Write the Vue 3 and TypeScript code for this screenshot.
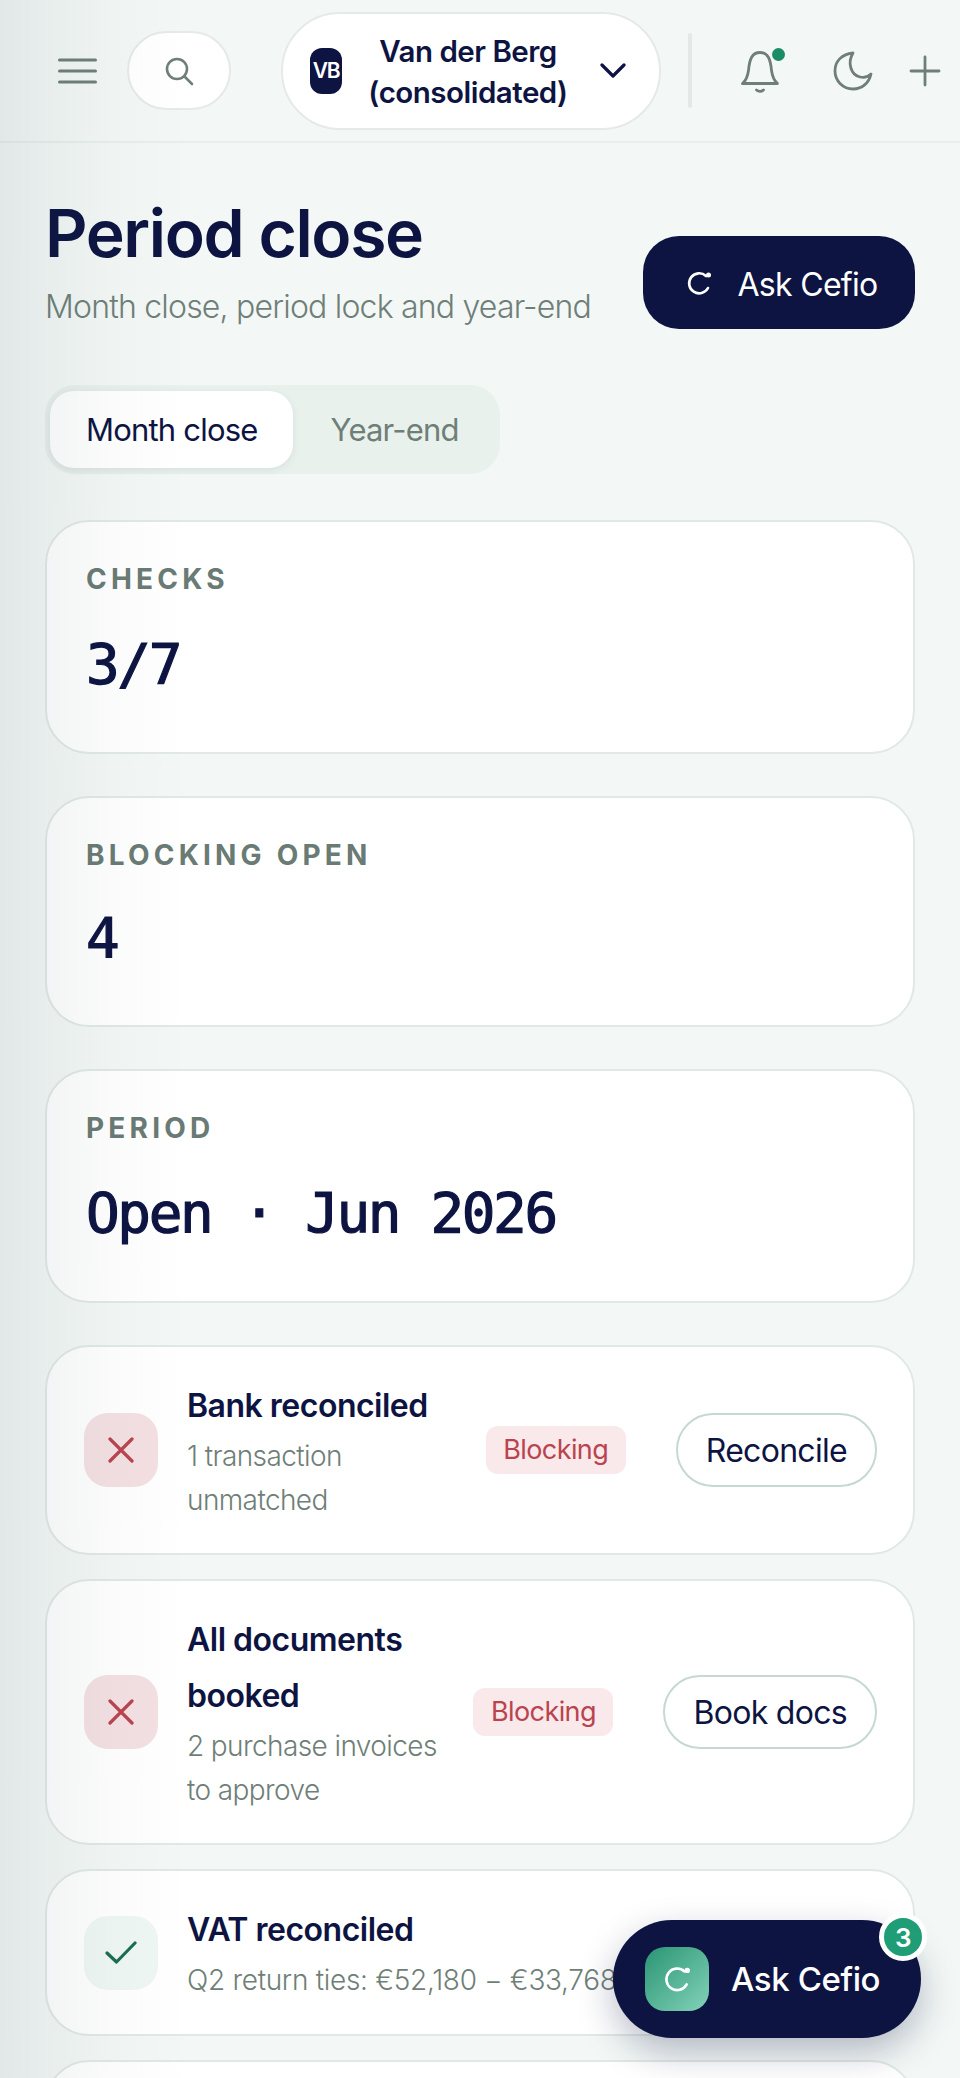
<script setup lang="ts">
type Stat = { label: string; value: string };
type Check = {
  title: string;
  sub: string;
  ok: boolean;
  action?: string;
};

const stats: Stat[] = [
  { label: "CHECKS", value: "3/7" },
  { label: "BLOCKING OPEN", value: "4" },
  { label: "PERIOD", value: "Open · Jun 2026" },
];

const checks: Check[] = [
  { title: "Bank reconciled", sub: "1 transaction unmatched", ok: false, action: "Reconcile" },
  { title: "All documents booked", sub: "2 purchase invoices to approve", ok: false, action: "Book docs" },
  { title: "VAT reconciled", sub: "Q2 return ties: €52,180 − €33,768", ok: true },
];
</script>

<template>
  <div class="page">
    <header class="topbar">
      <button class="icon-btn menu" aria-label="Menu">
        <svg width="39" height="26" viewBox="0 0 39 26" fill="none" stroke="#6f7f78" stroke-width="3" stroke-linecap="round">
          <path d="M1.5 2h36M1.5 13h36M1.5 24h36" />
        </svg>
      </button>
      <button class="search" aria-label="Search">
        <svg width="30" height="30" viewBox="0 0 30 30" fill="none" stroke="#6f7f78" stroke-width="2.6" stroke-linecap="round">
          <circle cx="13" cy="13" r="10" />
          <path d="M20.5 20.5l7.5 7.5" />
        </svg>
      </button>
      <button class="company">
        <span class="avatar">VB</span>
        <span class="company-name">Van der Berg<br />(consolidated)</span>
        <svg width="26" height="15" viewBox="0 0 26 15" fill="none" stroke="#0d1442" stroke-width="3.2" stroke-linecap="round" stroke-linejoin="round">
          <path d="M2 2l11 11L24 2" />
        </svg>
      </button>
      <span class="divider"></span>
      <button class="icon-btn bell" aria-label="Notifications">
        <svg width="42" height="44" viewBox="0 0 42 44" fill="none" stroke="#6f7f78" stroke-width="2.8" stroke-linecap="round" stroke-linejoin="round">
          <path d="M3.500 34.500h35c-3-2.500-5-6-6-13C31.500 10 29 3.500 21 3.500S10.500 10 9.500 21.500c-1 7-3 10.500-6 13z" />
          <path d="M17.500 41c2 1.800 5 1.800 7 0" />
        </svg>
        <span class="dot"></span>
      </button>
      <button class="icon-btn moon" aria-label="Theme">
        <svg width="40" height="40" viewBox="0 0 40 40" fill="none" stroke="#6f7f78" stroke-width="2.8" stroke-linecap="round" stroke-linejoin="round">
          <path d="M20 2C9 3 2 10 2 20c0 10 8 18 18 18 9 0 16-6 18-15-3 3-7 4-11 3C18 24 14 12 20 2z" />
        </svg>
      </button>
      <button class="icon-btn plus" aria-label="Add">
        <svg width="32" height="32" viewBox="0 0 32 32" fill="none" stroke="#6f7f78" stroke-width="2.8" stroke-linecap="round">
          <path d="M16 2v28M2 16h28" />
        </svg>
      </button>
    </header>

    <main class="content">
      <section class="head">
        <div class="head-text">
          <h1>Period close</h1>
          <p>Month close, period lock and year-end</p>
        </div>
        <button class="ask">
          <svg width="26" height="26" viewBox="0 0 26 26" fill="none" stroke="#fff" stroke-width="2.6" stroke-linecap="round">
            <path d="M20 6A10 10 0 1 0 22 18" />
            <circle cx="22.500" cy="5" r="2.500" fill="#fff" stroke="none" />
          </svg>
          <span class="ask-label">Ask Cefio</span>
        </button>
      </section>

      <div class="tabs">
        <span class="tab active">Month close</span>
        <span class="tab">Year-end</span>
      </div>

      <section class="stats">
        <div v-for="s in stats" :key="s.label" class="card stat">
          <div class="stat-label">{{ s.label }}</div>
          <div class="stat-value">{{ s.value }}</div>
        </div>
      </section>

      <section class="checks">
        <div v-for="c in checks" :key="c.title" class="card check">
          <span class="state" :class="c.ok ? 'ok' : 'bad'">
            <svg v-if="c.ok" width="32" height="26" viewBox="0 0 32 26" fill="none" stroke="#1a6e52" stroke-width="3.2" stroke-linecap="round" stroke-linejoin="round">
              <path d="M2 13l9.500 9L30 3" />
            </svg>
            <svg v-else width="26" height="26" viewBox="0 0 26 26" fill="none" stroke="#b9444f" stroke-width="3.2" stroke-linecap="round">
              <path d="M2 2l22 22M24 2L2 24" />
            </svg>
          </span>
          <div class="check-text">
            <div class="check-title">{{ c.title }}</div>
            <div class="check-sub" :class="{ nowrap: c.ok }">{{ c.sub }}</div>
          </div>
          <span v-if="!c.ok" class="chip">Blocking</span>
          <button v-if="c.action" class="action">{{ c.action }}</button>
        </div>
        <!-- next row only shows its top edge above the fold -->
        <div class="card check-next"></div>
      </section>
    </main>

    <button class="fab">
      <span class="fab-logo">
        <svg width="28" height="28" viewBox="0 0 26 26" fill="none" stroke="#fff" stroke-width="2.400" stroke-linecap="round">
          <path d="M20 6A10 10 0 1 0 22 18" />
          <circle cx="22.500" cy="5" r="2.500" fill="#fff" stroke="none" />
        </svg>
      </span>
      Ask Cefio
      <span class="fab-badge">3</span>
    </button>
    <div class="edge-shade"></div>
  </div>
</template>

<style>
html,
body {
  margin: 0;
  background: #f3f8f6;
}
</style>

<style scoped>
.page {
  position: relative;
  width: 960px;
  height: 2078px;
  overflow: hidden;
  background: #f3f8f6;
  color: #0d1442;
  font-family: Inter, "Liberation Sans", sans-serif;
}
button {
  font: inherit;
  color: inherit;
  border: 0;
  background: none;
  padding: 0;
}
.topbar {
  display: flex;
  align-items: center;
  height: 143px;
  padding-left: 58px;
  box-sizing: border-box;
  border-bottom: 2px solid #e8eeeb;
}
.icon-btn {
  position: relative;
  display: flex;
  flex: none;
}
.search {
  display: flex;
  align-items: center;
  justify-content: center;
  flex: none;
  width: 104px;
  height: 79px;
  margin-left: 30px;
  border-radius: 40px;
  background: #fff;
  border: 2px solid #e5eae8;
  box-sizing: border-box;
}
.company {
  display: flex;
  align-items: center;
  flex: none;
  width: 380px;
  height: 118px;
  margin-left: 50px;
  padding: 0 33px 0 27px;
  box-sizing: border-box;
  border-radius: 59px;
  background: #fff;
  border: 2px solid #e5eae8;
}
.avatar {
  display: flex;
  align-items: center;
  justify-content: center;
  flex: none;
  width: 32px;
  height: 46px;
  border-radius: 12px;
  background: #0d1442;
  color: #fff;
  font-size: 21px;
  font-weight: 600;
  letter-spacing: -1.2px;
}
.company-name {
  flex: 1;
  padding: 2px 6px 0 0;
  text-align: center;
  font-size: 29.5px;
  line-height: 41px;
  font-weight: 600;
  letter-spacing: -0.5px;
}
.divider {
  flex: none;
  width: 4px;
  height: 75px;
  margin-left: 27px;
  background: #e3e9e6;
  border-radius: 2px;
}
.bell {
  margin-left: 47px;
}
.dot {
  position: absolute;
  top: -1px;
  right: -4px;
  width: 13px;
  height: 13px;
  border-radius: 50%;
  background: #1b8d66;
}
.moon {
  margin-left: 52px;
}
.plus {
  margin-left: 36px;
}
.content {
  padding: 0 45px;
}
.head {
  display: flex;
  justify-content: space-between;
  align-items: flex-end;
  margin-top: 50px;
}
h1 {
  margin: 0;
  font-size: 66px;
  line-height: 80px;
  font-weight: 600;
  letter-spacing: -1.4px;
}
.head-text p {
  margin: 11px 0 0;
  font-size: 32px;
  line-height: 46px;
  font-weight: 300;
  color: #6f7f78;
  letter-spacing: -0.8px;
}
.ask {
  display: flex;
  align-items: center;
  justify-content: center;
  gap: 25px;
  width: 272px;
  height: 93px;
  padding-left: 6px;
  box-sizing: border-box;
  border-radius: 36px;
  background: #0d1442;
  color: #fff;
  font-size: 32px;
  letter-spacing: -0.7px;
  margin-bottom: 1px;
}
.ask-label {
  padding-top: 3px;
}
.tabs {
  display: flex;
  width: fit-content;
  margin-top: 55px;
  padding: 6px 5px;
  border-radius: 30px;
  background: #e9f1ed;
}
.tab {
  padding: 0 36px 0 38px;
  height: 77px;
  line-height: 77px;
  border-radius: 24px;
  font-size: 31px;
  letter-spacing: -0.8px;
  color: #6f7f78;
}
.tab.active {
  padding: 0 35px 0 36px;
  background: #fff;
  color: #0d1442;
  box-shadow: 0 2px 8px rgba(13, 20, 66, 0.07);
}
.card {
  background: #fff;
  border: 2px solid #e0e9e5;
  border-radius: 44px;
  box-sizing: border-box;
}
.stats {
  display: flex;
  flex-direction: column;
  gap: 42px;
  margin-top: 46px;
}
.stat {
  padding: 40px 39px;
  height: 234px;
}
.stat:nth-child(2) {
  height: 231px;
}
.stat:nth-child(2) .stat-value {
  margin-top: 33px;
}
.stat-label {
  font-size: 28px;
  line-height: 34px;
  font-weight: 700;
  letter-spacing: 4.2px;
  color: #6a7a74;
}
.stat-value {
  margin-top: 35px;
  font-family: "DejaVu Sans Mono", "Liberation Mono", monospace;
  font-size: 56px;
  line-height: 66px;
  letter-spacing: -2.4px;
  -webkit-text-stroke: 1.2px #0d1442;
}
.checks {
  display: flex;
  flex-direction: column;
  gap: 24px;
  margin-top: 42px;
}
.check {
  display: flex;
  align-items: center;
  gap: 20px;
  padding: 31px 36px 31px 37px;
}
.check-next {
  height: 167px;
}
.state {
  display: flex;
  align-items: center;
  justify-content: center;
  flex: none;
  width: 74px;
  height: 74px;
  margin-right: 9px;
  border-radius: 24px;
}
.state.bad {
  background: #f4e0e3;
}
.state.ok {
  background: #eff7f4;
}
.check-text {
  flex: 1;
  min-width: 0;
}
.check-title {
  font-size: 32px;
  line-height: 56px;
  font-weight: 600;
  letter-spacing: -0.5px;
}
.check-sub {
  font-size: 28px;
  line-height: 44px;
  font-weight: 300;
  color: #6f7f78;
  letter-spacing: -0.6px;
}
.check-sub.nowrap {
  margin-bottom: 1px;
  white-space: nowrap;
  letter-spacing: -0.3px;
}
.chip {
  flex: none;
  width: 140px;
  height: 48px;
  line-height: 48px;
  text-align: center;
  border-radius: 12px;
  background: #f9e9ea;
  color: #b9444f;
  font-size: 27px;
  letter-spacing: -0.6px;
}
.action {
  flex: none;
  height: 74px;
  margin-left: 30px;
  padding: 0 28px;
  border: 2px solid #c7d8d1;
  border-radius: 37px;
  background: #fff;
  font-size: 32px;
  letter-spacing: -0.7px;
}
.fab {
  position: absolute;
  left: 613px;
  top: 1920px;
  display: flex;
  align-items: center;
  gap: 22px;
  width: 308px;
  height: 118px;
  padding-left: 32px;
  box-sizing: border-box;
  border-radius: 59px;
  background: #0d1442;
  color: #fff;
  font-size: 33px;
  font-weight: 500;
  letter-spacing: -0.4px;
  box-shadow: 0 14px 36px rgba(13, 20, 66, 0.28);
}
.fab-logo {
  display: flex;
  align-items: center;
  justify-content: center;
  flex: none;
  width: 64px;
  height: 64px;
  border-radius: 20px;
  background: linear-gradient(135deg, #2a9573, #83d2b9);
}
.fab-badge {
  position: absolute;
  top: -7px;
  right: -6px;
  display: flex;
  align-items: center;
  justify-content: center;
  width: 48px;
  height: 48px;
  box-sizing: border-box;
  border: 5px solid #fff;
  border-radius: 50%;
  background: #1f9d77;
  font-size: 26px;
  font-weight: 600;
}
.edge-shade {
  position: absolute;
  left: 0;
  top: 0;
  bottom: 0;
  width: 190px;
  background: linear-gradient(90deg, rgba(40, 60, 70, 0.085), rgba(40, 60, 70, 0.055) 25%, rgba(40, 60, 70, 0.02) 60%, rgba(40, 60, 70, 0));
  pointer-events: none;
}
</style>
